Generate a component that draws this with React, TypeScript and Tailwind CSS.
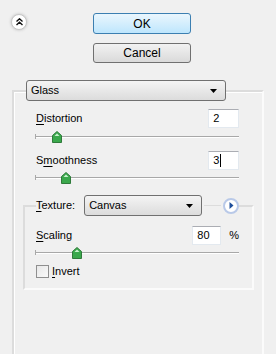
import React from 'react';

const font = { fontFamily: '"Liberation Sans", Arial, sans-serif' };

const Key: React.FC<{ children: React.ReactNode }> = ({ children }) => <span className="underline underline-offset-[2px]">{children}</span>;

const Slider: React.FC<{ pos: number }> = ({ pos }) => (
    <div className="relative h-[12px] w-[204px]">
        <div className="absolute left-0 right-0 top-[5px] h-[2px] border-t border-[#a8a8a8] border-b border-b-white" />
        <div className="absolute left-0 top-[3px] h-[5px] w-[2px] border-l border-[#a8a8a8]" />
        <svg className="absolute top-0" style={{ left: pos - 5 }} width="10" height="12" viewBox="0 0 10 12">
            <path d="M5 0.5 L9.5 4.5 L9.5 11.5 L0.5 11.5 L0.5 4.5 Z" fill="#3aa84c" stroke="#2f7a3a" />
            <path d="M5 2.5 L7.5 5 L2.5 5 Z" fill="#c9f2cf" />
        </svg>
    </div>
);

const Field: React.FC<{ value: string; caret?: boolean; width?: string }> = ({ value, caret, width = 'w-[31px]' }) => (
    <div className={`${width} h-[19px] bg-white border border-[#e3e9ef] border-t-[#abadb3] flex items-center pl-[4px] text-[11px] text-black`}>
        {value}
        {caret && <span className="ml-px h-[13px] w-px bg-black" />}
    </div>
);

const Combo: React.FC<{ label: string; width: string }> = ({ label, width }) => (
    <div className={`${width} h-[21px] rounded-[3px] border border-[#707070] bg-gradient-to-b from-[#f4f4f4] to-[#dcdcdc] flex items-center justify-between pl-[4px] pr-[8px] text-[11px] text-black`}>
        <span>{label}</span>
        <svg width="7" height="4" viewBox="0 0 7 4"><path d="M0 0 H7 L3.5 4 Z" fill="#000" /></svg>
    </div>
);

export default function App() {
    return (
        <div className="w-[276px] h-[354px] bg-[#f0f0f0] overflow-hidden text-black" style={font}>
            <div className="flex pt-[13px]">
                <div className="ml-[11px] mt-[1px] w-[16px] h-[16px] rounded-full bg-white border border-[#c8c8c8] shadow-[0_0_3px_#bbb] flex items-center justify-center">
                    <svg width="7" height="8" viewBox="0 0 7 8">
                        <path d="M0.5 3.5 L3.5 0.8 L6.5 3.5 M0.5 7 L3.5 4.3 L6.5 7" fill="none" stroke="#111" strokeWidth="1.4" />
                    </svg>
                </div>
                <div className="ml-[66px] flex flex-col gap-[9px]">
                    <div className="w-[98px] h-[21px] rounded-[3px] border border-[#3c7fb1] bg-gradient-to-b from-[#eaf6fd] to-[#bee6fd] flex items-center justify-center text-[12px]">OK</div>
                    <div className="w-[98px] h-[20px] rounded-[3px] border border-[#707070] bg-gradient-to-b from-[#f2f2f2] to-[#dadada] flex items-center justify-center text-[12px]">Cancel</div>
                </div>
            </div>

            <fieldset className="mt-[17px] ml-[12px] w-[252px] h-[300px] border-2 border-[#dcdcdc] border-r-[#fbfbfb] border-b-[#fbfbfb] shadow-[inset_1px_1px_0_#fff] pl-[9px] pr-[8px] pb-0 m-0">
                <legend className="ml-[3px] p-0">
                    <Combo label="Glass" width="w-[200px]" />
                </legend>

                <div className="pl-[13px] pr-[15px] mt-[8px]">
                    <div className="flex items-center justify-between h-[19px]">
                        <span className="text-[11px]"><Key>D</Key>istortion</span>
                        <Field value="2" />
                    </div>
                    <div className="mt-[3px] -ml-px">
                        <Slider pos={22} />
                    </div>
                    <div className="mt-[8px] flex items-center justify-between h-[19px]">
                        <span className="text-[11px]">S<Key>m</Key>oothness</span>
                        <Field value="3" caret />
                    </div>
                    <div className="mt-[2px] -ml-px">
                        <Slider pos={31} />
                    </div>
                </div>

                <fieldset className="mt-[11px] w-[231px] h-[95px] border-2 border-[#dcdcdc] border-r-[#fbfbfb] border-b-[#fbfbfb] pl-[11px] pr-[13px] m-0">
                    <legend className="p-0">
                        <div className="flex items-center h-[21px]">
                            <span className="text-[11px] mr-[9px]"><Key>T</Key>exture:</span>
                            <Combo label="Canvas" width="w-[118px]" />
                            <div className="w-[17px] h-px bg-[#dcdcdc] mx-[2px]" />
                            <div className="w-[16px] h-[16px] rounded-full border-2 border-[#b9c9e8] bg-white flex items-center justify-center">
                                <svg width="5" height="7" viewBox="0 0 5 7"><path d="M0.5 0 L4.5 3.5 L0.5 7 Z" fill="#1f4f9c" /></svg>
                            </div>
                        </div>
                    </legend>
                    <div className="mt-[10px] flex items-center h-[19px]">
                        <span className="text-[11px] flex-1"><Key>S</Key>caling</span>
                        <Field value="80" width="w-[29px]" />
                        <span className="text-[11px] ml-[8px]">%</span>
                    </div>
                    <div className="mt-[2px] -ml-px">
                        <Slider pos={42} />
                    </div>
                    <div className="mt-[4px] flex items-center">
                        <div className="w-[13px] h-[13px] border border-[#8f8f8f] bg-gradient-to-br from-[#e8e8e8] to-[#fafafa]" />
                        <span className="text-[11px] ml-[3px]"><Key>I</Key>nvert</span>
                    </div>
                </fieldset>
            </fieldset>
        </div>
    );
}
